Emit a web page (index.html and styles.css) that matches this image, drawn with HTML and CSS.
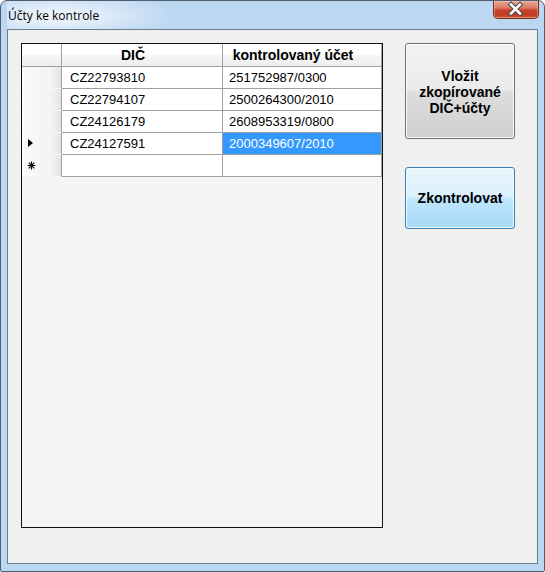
FILE: index.html
```html
<!DOCTYPE html>
<html lang="cs">
<head>
    <meta charset="UTF-8">
    <title>Účty ke kontrole</title>
    <link rel="stylesheet" href="styles.css">
</head>
<body>
    <div class="window">
        <div class="titlebar">
            <span class="title">Účty ke kontrole</span>
            <div class="close">
                <svg width="46" height="18" viewBox="0 0 46 18">
                    <path d="M18 4.5 L27 13.5 M27 4.5 L18 13.5" stroke="#4a4a4a" stroke-width="4.6" stroke-linecap="square"/>
                    <path d="M18 4.5 L27 13.5 M27 4.5 L18 13.5" stroke="#ffffff" stroke-width="2.6" stroke-linecap="square"/>
                </svg>
            </div>
        </div>
        <div class="client">
            <div class="grid">
                <div class="grid-row header">
                    <div class="cell rowhead"></div>
                    <div class="cell colhead">DIČ</div>
                    <div class="cell colhead">kontrolovaný účet</div>
                </div>
                <div class="grid-row">
                    <div class="cell rowhead"></div>
                    <div class="cell dic">CZ22793810</div>
                    <div class="cell acct">251752987/0300</div>
                </div>
                <div class="grid-row">
                    <div class="cell rowhead"></div>
                    <div class="cell dic">CZ22794107</div>
                    <div class="cell acct">2500264300/2010</div>
                </div>
                <div class="grid-row">
                    <div class="cell rowhead"></div>
                    <div class="cell dic">CZ24126179</div>
                    <div class="cell acct">2608953319/0800</div>
                </div>
                <div class="grid-row">
                    <div class="cell rowhead"><span class="arrow"></span></div>
                    <div class="cell dic">CZ24127591</div>
                    <div class="cell acct selected">2000349607/2010</div>
                </div>
                <div class="grid-row">
                    <div class="cell rowhead">
                        <svg class="star" width="9" height="9" viewBox="0 0 9 9">
                            <path d="M4.5 0.5 V8.5 M0.5 4.5 H8.5 M1.7 1.7 L7.3 7.3 M7.3 1.7 L1.7 7.3" stroke="#000" stroke-width="1.1"/>
                        </svg>
                    </div>
                    <div class="cell dic"></div>
                    <div class="cell acct"></div>
                </div>
            </div>
            <div class="buttons">
                <button class="btn btn-paste">Vložit<br>zkopírované<br>DIČ+účty</button>
                <button class="btn btn-check">Zkontrolovat</button>
            </div>
        </div>
    </div>
</body>
</html>
```

FILE: styles.css
```css
body {
    margin: 0;
    background: #ffffff;
}
.window {
    width: 545px;
    height: 572px;
    box-sizing: border-box;
    display: flex;
    flex-direction: column;
    padding: 0 6px 7px 6px;
    border: 1px solid #4f5d6d;
    border-radius: 7px 7px 2px 2px;
    background: #bcd7f2;
}
.titlebar {
    height: 28px;
    display: flex;
    align-items: flex-start;
    background: radial-gradient(ellipse 120px 24px at 50px 15px, rgba(255, 255, 255, 0.85), rgba(255, 255, 255, 0) 100%);
}
.title {
    padding: 7px 0 0 1px;
    font-family: "Open Sans", "Noto Sans", sans-serif;
    font-size: 12px;
    line-height: 16px;
    color: #000;
}
.close {
    margin-left: auto;
    margin-right: -1px;
    width: 46px;
    height: 18px;
    box-sizing: border-box;
    border: 1px solid #7c2c1d;
    border-top: none;
    border-radius: 0 0 5px 5px;
    background: linear-gradient(#e6a696 0%, #dc7b64 40%, #c8402a 55%, #c13b22 80%, #d25a3c 100%);
    box-shadow: inset 0 0 0 1px rgba(255, 210, 190, 0.4);
}
.close svg {
    display: block;
    margin: -1px 0 0 -1px;
}
.client {
    flex: 1;
    display: flex;
    gap: 22px;
    padding: 13px 0 0 13px;
    border: 1px solid #6a7b8c;
    background: #f0f0f0;
}
.grid {
    width: 362px;
    height: 485px;
    box-sizing: border-box;
    border: 1px solid #101010;
    background: #f4f4f4;
}
.grid-row {
    display: grid;
    grid-template-columns: 40px 161px 159px;
    height: 22px;
}
.grid-row.header {
    height: 23px;
}
.cell {
    box-sizing: border-box;
    border-right: 1px solid #a0a0a0;
    border-bottom: 1px solid #a0a0a0;
    background: #ffffff;
    font-family: "Liberation Sans", Arial, sans-serif;
    font-size: 13px;
    line-height: 21px;
    color: #000;
    white-space: nowrap;
    overflow: hidden;
}
.header .cell {
    line-height: 22px;
    background: linear-gradient(#ffffff 0%, #ffffff 45%, #f4f4f4 55%, #efefef 100%);
}
.colhead {
    font-size: 14px;
    font-weight: bold;
    text-align: center;
    padding-right: 18px;
}
.rowhead {
    position: relative;
    border-bottom-color: #f7f7f7;
    background: linear-gradient(to right, #fbfbfb 0%, #f3f3f3 75%, #e4e4e4 100%);
}
.header .rowhead {
    border-bottom-color: #a0a0a0;
}
.dic {
    padding-left: 8px;
}
.acct {
    padding-left: 6px;
}
.selected {
    background: #3399ff;
    color: #ffffff;
}
.arrow {
    position: absolute;
    left: 6px;
    top: 6px;
    width: 0;
    height: 0;
    border-top: 4.5px solid transparent;
    border-bottom: 4.5px solid transparent;
    border-left: 5px solid #000;
}
.star {
    position: absolute;
    left: 5px;
    top: 6px;
}
.buttons {
    display: flex;
    flex-direction: column;
    gap: 28px;
}
.btn {
    width: 110px;
    box-sizing: border-box;
    border-radius: 3px;
    font-family: "Liberation Sans", Arial, sans-serif;
    font-size: 14px;
    font-weight: bold;
    line-height: 16px;
    color: #000;
    padding: 0;
}
.btn-paste {
    height: 96px;
    padding-top: 2px;
    border: 1px solid #707070;
    background: linear-gradient(#f2f2f2 0%, #ebebeb 48%, #dddddd 52%, #cfcfcf 100%);
    box-shadow: inset 0 0 0 1px #fbfbfb;
}
.btn-check {
    height: 62px;
    border: 1px solid #3c7fb1;
    background: linear-gradient(#eaf6fd 0%, #d9f0fc 48%, #bee6fd 52%, #a7d9f5 100%);
    box-shadow: inset 0 0 0 1px #f4fbff;
}
```
